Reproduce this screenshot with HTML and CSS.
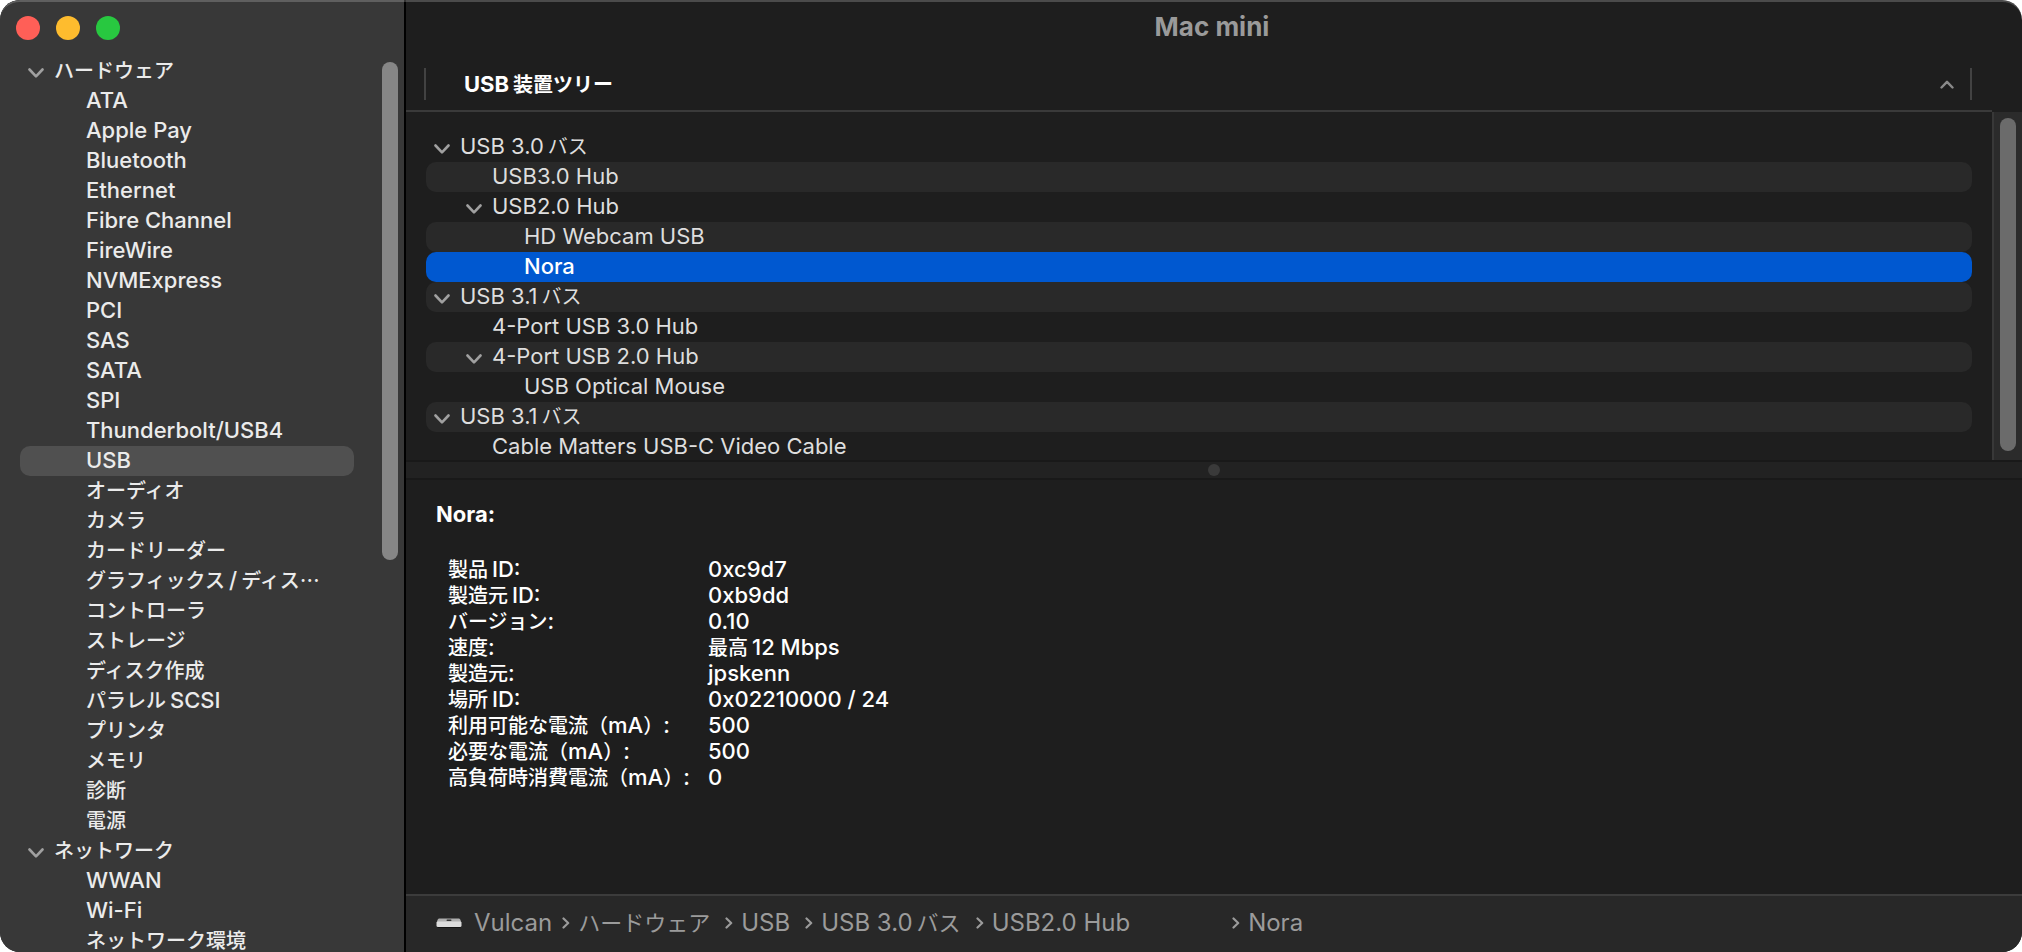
FILE: index.html
```html
<!DOCTYPE html>
<html lang="ja">
<head>
<meta charset="utf-8">
<title>Mac mini</title>
<link rel="stylesheet" href="styles.css">
</head>
<body>
<svg class="defs" width="0" height="0" aria-hidden="true">
  <symbol id="chevron" viewBox="0 0 16 10"><path d="M1.5 1.5 8 8.3 14.5 1.5" fill="none" stroke="currentColor" stroke-width="2.6" stroke-linecap="round" stroke-linejoin="round"/></symbol>
  <symbol id="arrow" viewBox="0 0 8 12"><path d="M1.5 1.5 6.2 6 1.5 10.5" fill="none" stroke="currentColor" stroke-width="2.2" stroke-linecap="round" stroke-linejoin="round"/></symbol>
</svg>
<div class="window">
  <aside class="sidebar">
    <div class="lights">
      <button class="light close" aria-label="閉じる"></button>
      <button class="light minimize" aria-label="しまう"></button>
      <button class="light zoom" aria-label="拡大"></button>
    </div>
    <nav class="categories" aria-label="カテゴリ">
      <button class="row group"><svg class="chevron"><use href="#chevron"/></svg><span class="ja">ハードウェア</span></button>
      <button class="row item">ATA</button>
      <button class="row item">Apple Pay</button>
      <button class="row item">Bluetooth</button>
      <button class="row item">Ethernet</button>
      <button class="row item">Fibre Channel</button>
      <button class="row item">FireWire</button>
      <button class="row item">NVMExpress</button>
      <button class="row item">PCI</button>
      <button class="row item">SAS</button>
      <button class="row item">SATA</button>
      <button class="row item">SPI</button>
      <button class="row item">Thunderbolt/USB4</button>
      <button class="row item current" aria-current="page">USB</button>
      <button class="row item"><span class="ja">オーディオ</span></button>
      <button class="row item"><span class="ja">カメラ</span></button>
      <button class="row item"><span class="ja">カードリーダー</span></button>
      <button class="row item"><span class="ja">グラフィックス</span><span class="slash">/</span><span class="ja">ディス…</span></button>
      <button class="row item"><span class="ja">コントローラ</span></button>
      <button class="row item"><span class="ja">ストレージ</span></button>
      <button class="row item"><span class="ja">ディスク作成</span></button>
      <button class="row item"><span class="ja before">パラレル</span>SCSI</button>
      <button class="row item"><span class="ja">プリンタ</span></button>
      <button class="row item"><span class="ja">メモリ</span></button>
      <button class="row item"><span class="ja">診断</span></button>
      <button class="row item"><span class="ja">電源</span></button>
      <button class="row group"><svg class="chevron"><use href="#chevron"/></svg><span class="ja">ネットワーク</span></button>
      <button class="row item">WWAN</button>
      <button class="row item">Wi-Fi</button>
      <button class="row item"><span class="ja">ネットワーク環境</span></button>
    </nav>
    <div class="side-scroll"><div class="side-thumb"></div></div>
  </aside>

  <main class="main">
    <h1 class="title">Mac mini</h1>
    <div class="column-head">
      <button class="column-button"><span>USB<span class="ja after">装置ツリー</span></span><svg class="sort" viewBox="0 0 14 9"><path d="M1.5 7.5 7 1.8 12.5 7.5" fill="none" stroke="currentColor" stroke-width="2.4" stroke-linecap="round" stroke-linejoin="round"/></svg></button>
    </div>
    <section class="tree-pane">
      <div class="tree" role="tree" aria-label="USB装置ツリー">
        <div class="node" role="treeitem"><svg class="chevron"><use href="#chevron"/></svg><span>USB 3.0<span class="ja after">バス</span></span></div>
        <div class="node level2 leaf" role="treeitem">USB3.0 Hub</div>
        <div class="node level2" role="treeitem"><svg class="chevron"><use href="#chevron"/></svg>USB2.0 Hub</div>
        <div class="node level3 leaf" role="treeitem">HD Webcam USB</div>
        <div class="node level3 leaf selected" role="treeitem" aria-selected="true">Nora</div>
        <div class="node" role="treeitem"><svg class="chevron"><use href="#chevron"/></svg><span>USB 3.1<span class="ja after">バス</span></span></div>
        <div class="node level2 leaf" role="treeitem">4-Port USB 3.0 Hub</div>
        <div class="node level2" role="treeitem"><svg class="chevron"><use href="#chevron"/></svg>4-Port USB 2.0 Hub</div>
        <div class="node level3 leaf" role="treeitem">USB Optical Mouse</div>
        <div class="node" role="treeitem"><svg class="chevron"><use href="#chevron"/></svg><span>USB 3.1<span class="ja after">バス</span></span></div>
        <div class="node level2 leaf" role="treeitem">Cable Matters USB-C Video Cable</div>
      </div>
      <div class="track"><div class="thumb"></div></div>
    </section>
    <div class="splitter" role="separator"><div class="grip"></div></div>
    <section class="details">
      <h2 class="device">Nora:</h2>
      <table class="facts">
        <tr><th scope="row"><span class="ja before">製品</span>ID:</th><td>0xc9d7</td></tr>
        <tr><th scope="row"><span class="ja before">製造元</span>ID:</th><td>0xb9dd</td></tr>
        <tr><th scope="row"><span class="ja">バージョン</span>:</th><td>0.10</td></tr>
        <tr><th scope="row"><span class="ja">速度</span>:</th><td><span class="ja before">最高</span>12 Mbps</td></tr>
        <tr><th scope="row"><span class="ja">製造元</span>:</th><td>jpskenn</td></tr>
        <tr><th scope="row"><span class="ja before">場所</span>ID:</th><td>0x02210000 / 24</td></tr>
        <tr><th scope="row"><span class="ja">利用可能な電流（</span>mA<span class="ja">）</span>:</th><td>500</td></tr>
        <tr><th scope="row"><span class="ja">必要な電流（</span>mA<span class="ja">）</span>:</th><td>500</td></tr>
        <tr><th scope="row"><span class="ja">高負荷時消費電流（</span>mA<span class="ja">）</span>:</th><td>0</td></tr>
      </table>
    </section>
    <nav class="path" aria-label="パス">
      <svg class="mini" viewBox="0 0 26 10"><path d="M3 .5h20q1 0 1.500 1.500l1 3H.5l1-3Q2 .5 3 .5z" fill="#b0b0b0"/><rect x=".5" y="3.500" width="25" height="5.500" rx="1.500" fill="#dcdcdc"/><path d="M1.500 9h23v1h-23z" fill="#141414"/><rect x="10.500" y="1.500" width="5" height="1.500" rx=".7" fill="#333"/></svg>
      <a class="crumb" href="#">Vulcan</a>
      <svg class="arrow"><use href="#arrow"/></svg>
      <a class="crumb wide" href="#"><span class="ja">ハードウェア</span></a>
      <svg class="arrow"><use href="#arrow"/></svg>
      <a class="crumb wide" href="#">USB</a>
      <svg class="arrow"><use href="#arrow"/></svg>
      <a class="crumb wide" href="#">USB 3.0<span class="ja after">バス</span></a>
      <svg class="arrow"><use href="#arrow"/></svg>
      <a class="crumb widest" href="#">USB2.0 Hub</a>
      <svg class="arrow"><use href="#arrow"/></svg>
      <a class="crumb" href="#">Nora</a>
    </nav>
  </main>
</div>
</body>
</html>
```
FILE: styles.css
```css
* { box-sizing: border-box; }

body {
  margin: 0;
  background: #fff;
  font-family: Inter, "Noto Sans CJK JP", sans-serif;
  font-size: 22px;
  line-height: 28px;
}

button {
  margin: 0;
  padding: 0;
  border: 0;
  background: none;
  color: inherit;
  font: inherit;
  text-align: left;
}

.defs { position: absolute; }

.ja {
  font-family: "Noto Sans CJK JP", sans-serif;
  font-size: 20px;
  line-height: 20px;
}
.before { margin-right: 4px; }
.after { margin-left: 4px; }
.slash { margin: 0 4px; }

.window {
  position: relative;
  display: flex;
  height: 100vh;
  overflow: hidden;
  border-radius: 20px;
  background: #1e1e1e;
}
.window::after {
  content: "";
  position: absolute;
  inset: 0;
  border-top: 2px solid rgba(255, 255, 255, 0.2);
  border-radius: 20px;
  pointer-events: none;
}

/* Sidebar */
.sidebar {
  position: relative;
  flex: 0 0 406px;
  overflow: hidden;
  border-right: 2px solid #000;
  background: #383838;
  color: #ebebeb;
  font-weight: 500;
}
.lights {
  display: flex;
  gap: 16px;
  padding: 16px;
}
.light {
  width: 24px;
  height: 24px;
  border-radius: 50%;
}
.close { background: #ff5f57; }
.minimize { background: #febc2e; }
.zoom { background: #28c840; }

.categories {
  display: flex;
  flex-direction: column;
  padding: 0 50px 0 20px;
}
.row {
  display: flex;
  flex: 0 0 30px;
  padding-bottom: 2px;
  border-radius: 10px;
  white-space: nowrap;
  align-items: baseline;
}
.row > .ja { line-height: 28px; }
.group { padding-left: 8px; gap: 10px; }
.item { padding-left: 66px; }
.current { background: #505050; }
.chevron {
  flex: none;
  width: 16px;
  height: 10px;
  margin-bottom: 1px;
  color: #a0a0a0;
}
.side-scroll {
  position: absolute;
  top: 62px;
  right: 6px;
  bottom: 0;
  width: 16px;
}
.side-thumb {
  height: 56%;
  border-radius: 8px;
  background: #868686;
}

/* Main column */
.main {
  display: flex;
  flex: 1;
  flex-direction: column;
  min-width: 0;
}
.title {
  margin: 0;
  padding: 12px 4px 26px 0;
  color: #9a9a9a;
  font-size: 26px;
  font-weight: 700;
  line-height: 30px;
  text-align: center;
}
.column-head {
  height: 44px;
  margin-right: 30px;
  padding: 0 20px 0 18px;
  border-bottom: 2px solid #3a3a3a;
}
.column-button {
  display: flex;
  align-items: center;
  justify-content: space-between;
  width: 100%;
  height: 32px;
  padding: 0 16px 0 38px;
  border: solid #424242;
  border-width: 0 2px;
  color: #fff;
  font-weight: 700;
}
.sort { width: 14px; height: 9px; color: #8a8a8a; }

.tree-pane {
  display: flex;
  flex: 348 1 0;
  min-height: 0;
}
.tree {
  flex: 1;
  padding: 20px 20px 0;
  overflow: hidden;
  color: #dedede;
}
.node {
  display: flex;
  align-items: baseline;
  gap: 10px;
  height: 30px;
  padding: 0 8px 2px;
  border-radius: 10px;
}
.node:nth-child(even) { background: #292929; }
.level2 { padding-left: 40px; }
.level2.leaf { padding-left: 66px; }
.level3.leaf { padding-left: 98px; }
.node.selected { background: #0058d0; color: #fff; font-weight: 500; }
.track {
  flex: 0 0 30px;
  padding: 6px;
  border-left: 2px solid #383838;
  background: #2b2b2b;
}
.thumb {
  width: 16px;
  height: 99%;
  border-radius: 8px;
  background: #6b6b6b;
}

.splitter {
  display: flex;
  align-items: center;
  justify-content: center;
  height: 20px;
  border: solid #191919;
  border-width: 2px 0;
  background: #222;
}
.grip {
  width: 12px;
  height: 12px;
  border-radius: 50%;
  background: #3a3a3a;
}

.details {
  flex: 374 1 0;
  min-height: 0;
  padding: 20px 30px;
  overflow: hidden;
  color: #fff;
  font-weight: 500;
}
.device {
  margin: 0 0 28px;
  font-size: 22px;
  font-weight: 700;
  line-height: 28px;
}
.facts { margin-left: 12px; border-collapse: collapse; }
.facts tr { height: 26px; }
.facts th,
.facts td {
  padding: 0;
  font-weight: 500;
  line-height: 26px;
  text-align: left;
  white-space: nowrap;
}
.facts th { width: 260px; }

.path {
  display: flex;
  align-items: center;
  height: 58px;
  padding: 0 30px 2px;
  border-top: 2px solid #3c3c3c;
  background: #282828;
  color: #9b9b9b;
  font-size: 24px;
}
.path .ja { font-size: 22px; }
.mini { width: 26px; height: 10px; margin-right: 12px; }
.crumb {
  margin-right: 10px;
  color: inherit;
  text-decoration: none;
  white-space: nowrap;
}
.crumb.wide { margin-right: 15px; }
.crumb.widest { margin-right: 102px; }
.arrow { width: 8px; height: 12px; margin-right: 8px; }
```
